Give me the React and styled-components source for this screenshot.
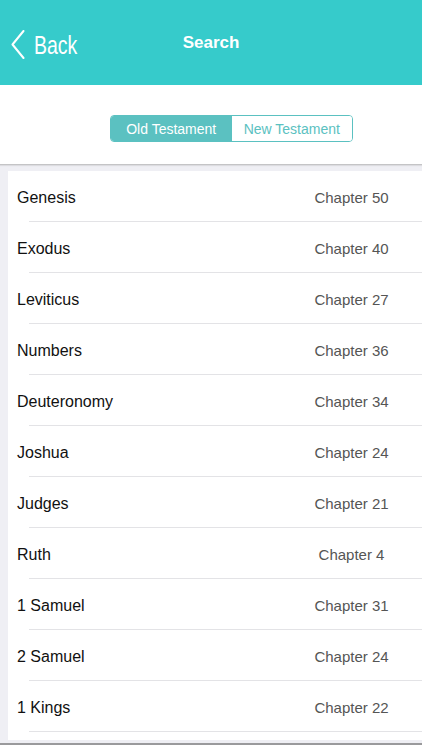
import React, { useState } from "react";
import styled, { createGlobalStyle } from "styled-components";

const Global = createGlobalStyle`
  html, body { margin: 0; padding: 0; background: #ffffff; }
  body { font-family: "Liberation Sans", Arial, sans-serif; }
`;

const Screen = styled.div`
  width: 422px;
  height: 750px;
  overflow: hidden;
  display: flex;
  flex-direction: column;
  background: #ffffff;
`;

const Header = styled.header`
  height: 85px;
  flex: 0 0 85px;
  background: #36cbcb;
  position: relative;
  display: flex;
  align-items: center;
  justify-content: center;
`;

const BackButton = styled.button`
  position: absolute;
  left: 11px;
  top: 29px;
  display: flex;
  align-items: center;
  gap: 9px;
  padding: 0;
  border: 0;
  background: transparent;
  color: #ffffff;
  cursor: pointer;
`;

const BackLabel = styled.span`
  font-family: "Liberation Sans", Arial, sans-serif;
  font-size: 25px;
  line-height: 28px;
  display: inline-block;
  transform: scaleX(0.78);
  transform-origin: left center;
  margin-top: 2px;
`;

const Title = styled.h1`
  margin: 0;
  font-size: 17px;
  font-weight: 700;
  color: #ffffff;
  position: relative;
  top: 0px;
`;

const SegmentArea = styled.div`
  flex: 0 0 80px;
  box-sizing: border-box;
  padding: 30px 0 0 110px;
  border-bottom: 1px solid #c4c4c6;
  box-shadow: 0 1px 1px rgba(0, 0, 0, 0.08);
  position: relative;
  z-index: 1;
`;

const Segmented = styled.div`
  display: inline-flex;
  width: 243px;
  height: 27px;
  box-sizing: border-box;
  border: 1px solid #5bc1c1;
  border-radius: 4px;
  overflow: hidden;
`;

const Segment = styled.button`
  flex: 1 1 0;
  border: 0;
  margin: 0;
  padding: 0;
  font-family: "Liberation Sans", Arial, sans-serif;
  font-size: 14px;
  background: ${(p) => (p.$active ? "#5bc1c1" : "#ffffff")};
  color: ${(p) => (p.$active ? "#ffffff" : "#5bc1c1")};
  cursor: pointer;
`;

const Content = styled.div`
  flex: 0 0 578px;
  min-height: 0;
  overflow: hidden;
  background: #efeff4;
  box-sizing: border-box;
  padding: 6px 0 3px 8px;
  display: flex;
`;

const Card = styled.div`
  flex: 1;
  min-height: 0;
  background: #ffffff;
  overflow: hidden;
`;

const Row = styled.div`
  height: 51px;
  box-sizing: border-box;
  padding: 2px 0 0 9px;
  position: relative;
  display: flex;
  align-items: center;
  &::after {
    content: "";
    position: absolute;
    left: 21px;
    right: 0;
    bottom: 0;
    height: 1px;
    background: #e3e3e6;
  }
`;

const Book = styled.span`
  flex: 1;
  font-size: 16px;
  color: #111111;
`;

const Chapter = styled.span`
  width: 90px;
  margin-right: 25.5px;
  text-align: center;
  font-size: 15px;
  color: #555555;
`;

const Footer = styled.div`
  flex: 1 1 auto;
  border-top: 2px solid #9a9a9c;
  background: #ffffff;
`;

const books = [
  ["Genesis", 50],
  ["Exodus", 40],
  ["Leviticus", 27],
  ["Numbers", 36],
  ["Deuteronomy", 34],
  ["Joshua", 24],
  ["Judges", 21],
  ["Ruth", 4],
  ["1 Samuel", 31],
  ["2 Samuel", 24],
  ["1 Kings", 22],
];

export default function App() {
  const [tab, setTab] = useState("old");
  return (
    <>
      <Global />
      <Screen>
        <Header>
          <BackButton>
            <svg width="14" height="29" viewBox="0 0 14 29">
              <polyline
                points="12.5,1 1.5,14.5 12.5,28"
                fill="none"
                stroke="#ffffff"
                strokeWidth="2"
                strokeLinecap="round"
                strokeLinejoin="round"
              />
            </svg>
            <BackLabel>Back</BackLabel>
          </BackButton>
          <Title>Search</Title>
        </Header>
        <SegmentArea>
          <Segmented>
            <Segment $active={tab === "old"} onClick={() => setTab("old")}>
              Old Testament
            </Segment>
            <Segment $active={tab === "new"} onClick={() => setTab("new")}>
              New Testament
            </Segment>
          </Segmented>
        </SegmentArea>
        <Content>
          <Card>
            {books.map(([name, ch]) => (
              <Row key={name}>
                <Book>{name}</Book>
                <Chapter>Chapter {ch}</Chapter>
              </Row>
            ))}
          </Card>
        </Content>
        <Footer />
      </Screen>
    </>
  );
}
